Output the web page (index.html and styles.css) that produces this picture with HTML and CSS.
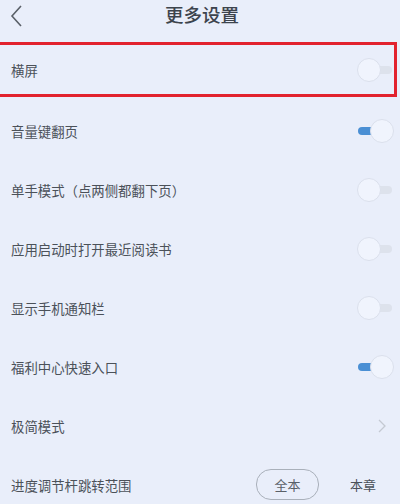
FILE: index.html
```html
<!DOCTYPE html>
<html lang="zh">
<head>
    <meta charset="UTF-8">
    <title>更多设置</title>
    <link rel="stylesheet" href="styles.css">
</head>
<body>
    <div class="header">
        <svg class="back" width="14" height="24" viewBox="0 0 14 24">
            <polyline points="11,2 2,12 11,22" fill="none" stroke="#5a6068" stroke-width="1.6" />
        </svg>
        <h1>更多设置</h1>
    </div>

    <div class="list">
        <div class="row row-mark">
            <span>横屏</span>
            <span class="toggle"></span>
        </div>
        <div class="rows">
            <div class="row">
                <span>音量键翻页</span>
                <span class="toggle on"></span>
            </div>
            <div class="row">
                <span>单手模式（点两侧都翻下页）</span>
                <span class="toggle"></span>
            </div>
            <div class="row">
                <span>应用启动时打开最近阅读书</span>
                <span class="toggle"></span>
            </div>
            <div class="row">
                <span>显示手机通知栏</span>
                <span class="toggle"></span>
            </div>
            <div class="row">
                <span>福利中心快速入口</span>
                <span class="toggle on"></span>
            </div>
            <div class="row">
                <span>极简模式</span>
                <svg class="arrow" width="8" height="14" viewBox="0 0 8 14">
                    <polyline points="1,1 7,7 1,13" fill="none" stroke="#c4c9d2" stroke-width="1.3" />
                </svg>
            </div>
            <div class="row">
                <span>进度调节杆跳转范围</span>
                <div class="range">
                    <span class="pill">全本</span>
                    <span class="chapter">本章</span>
                </div>
            </div>
        </div>
    </div>
</body>
</html>
```

FILE: styles.css
```css
body {
    margin: 0;
    width: 400px;
    height: 504px;
    overflow: hidden;
    background-color: #e9eefa;
    font-family: "Noto Sans CJK SC", "Noto Sans", sans-serif;
    color: #4b5159;
}

.header {
    height: 28px;
    display: flex;
    align-items: center;
    justify-content: center;
    position: relative;
}

.back {
    position: absolute;
    left: 10px;
    top: 4px;
}

.header h1 {
    margin: 0;
    font-size: 18.5px;
    font-weight: 500;
    color: #3d444d;
    padding-left: 4px;
    line-height: 28px;
}

.list {
    margin-top: 14px;
}

.row {
    height: 59px;
    display: flex;
    align-items: center;
    justify-content: space-between;
    padding: 0 8px 0 11px;
    font-size: 13.4px;
    box-sizing: border-box;
}

.row-mark {
    height: 55px;
    margin-left: -3px;
    margin-right: 3px;
    border: 3px solid #e2222e;
    padding: 0 2px 0 11px;
}

.rows {
    margin-top: 4px;
}

.toggle {
    width: 34px;
    height: 22px;
    position: relative;
}

.toggle::before {
    content: "";
    position: absolute;
    top: 7px;
    right: 0;
    width: 18px;
    height: 8px;
    border-radius: 4px;
    background: #dde2ec;
}

.toggle::after {
    content: "";
    position: absolute;
    top: -1px;
    left: -1px;
    width: 22px;
    height: 22px;
    border-radius: 50%;
    background: #f0f4fd;
    border: 1px solid #dbe0ec;
}

.toggle.on::before {
    left: 0;
    right: auto;
    width: 16px;
    background: #4a8fd4;
}

.toggle.on::after {
    left: auto;
    right: -2px;
}

.arrow {
    margin-right: 6px;
}

.range {
    display: flex;
    align-items: center;
}

.pill {
    width: 61px;
    height: 29px;
    border: 1px solid #a9b0ba;
    border-radius: 15px;
    display: flex;
    align-items: center;
    justify-content: center;
    font-size: 13px;
    color: #5a6068;
}

.chapter {
    margin-left: 31px;
    margin-right: 16px;
    font-size: 13px;
}
```
